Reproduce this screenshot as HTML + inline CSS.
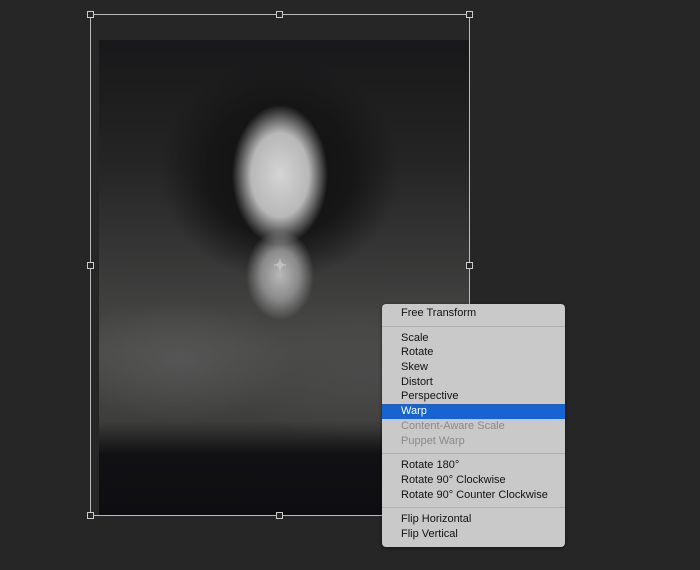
<!DOCTYPE html>
<html><head><style>
*{margin:0;padding:0;box-sizing:border-box}
body{width:700px;height:570px;background:#262626;position:relative;overflow:hidden;font-family:"Liberation Sans",sans-serif}
.photo{position:absolute;left:99px;top:40px;width:371px;height:476px;background:
radial-gradient(ellipse 48px 70px at 181px 135px,#d4d4d4 0%,#b8b8b8 60%,rgba(110,110,110,0) 100%),
radial-gradient(ellipse 34px 45px at 181px 235px,#b8b8b8 0%,#8a8a8a 55%,rgba(80,80,80,0) 100%),
radial-gradient(ellipse 120px 110px at 181px 130px,#111 0%,#161616 60%,rgba(25,25,25,0) 100%),
radial-gradient(ellipse 120px 60px at 80px 320px,#555 0%,rgba(70,70,70,0) 100%),
radial-gradient(ellipse 140px 70px at 260px 330px,#4a4a4a 0%,rgba(70,70,70,0) 100%),
linear-gradient(to bottom,#18181a 0%,#242424 25%,#363636 45%,#4a4a48 65%,#3e3e3c 80%,#111114 87%,#0e0e12 100%);}
.box{position:absolute;left:90px;top:14px;width:380px;height:502px;border:1px solid #bbb}
.h{position:absolute;width:7px;height:7px;border:1px solid #ccc;background:#262626}
.menu{position:absolute;left:382px;top:304px;width:183px;height:243px;background:#c9c9c9;border-radius:4px;font-size:11px;color:#111;padding-top:2px;box-shadow:0 1px 3px rgba(0,0,0,.5)}
.i{height:14.7px;line-height:14.7px;padding-left:19px}
.sep{height:1px;background:#b0b0b0;margin:5px 0 4px}
.sel{background:#1764d0;color:#fff}
.dis{color:#8a8a8a}
</style></head><body>
<div class="photo"></div>
<div class="box"></div>
<div class="h" style="left:87px;top:11px"></div>
<div class="h" style="left:276px;top:11px"></div>
<div class="h" style="left:466px;top:11px"></div>
<div class="h" style="left:87px;top:262px"></div>
<div class="h" style="left:466px;top:262px"></div>
<div class="h" style="left:87px;top:512px"></div>
<div class="h" style="left:276px;top:512px"></div>
<svg style="position:absolute;left:274px;top:259px" width="12" height="12"><path d="M6 0V12M0 6H12" stroke="#ccc" stroke-width="1"/><circle cx="6" cy="6" r="2.5" fill="none" stroke="#ccc"/></svg>
<div class="menu">
<div class="i">Free Transform</div>
<div class="sep"></div>
<div class="i">Scale</div>
<div class="i">Rotate</div>
<div class="i">Skew</div>
<div class="i">Distort</div>
<div class="i">Perspective</div>
<div class="i sel">Warp</div>
<div class="i dis">Content-Aware Scale</div>
<div class="i dis">Puppet Warp</div>
<div class="sep"></div>
<div class="i">Rotate 180°</div>
<div class="i">Rotate 90° Clockwise</div>
<div class="i">Rotate 90° Counter Clockwise</div>
<div class="sep"></div>
<div class="i">Flip Horizontal</div>
<div class="i">Flip Vertical</div>
</div>
</body></html>
